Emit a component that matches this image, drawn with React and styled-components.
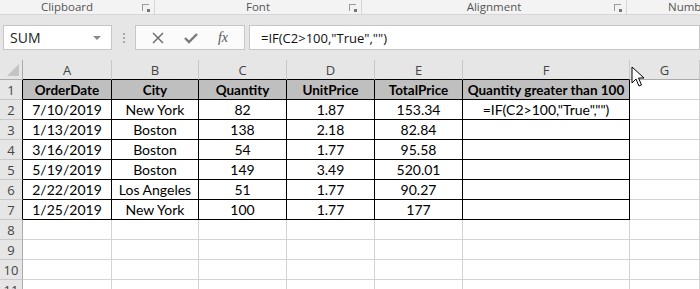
import React from 'react';
import styled, { createGlobalStyle } from 'styled-components';

const GlobalStyle = createGlobalStyle`
  body {
    margin: 0;
    background: #ffffff;
    overflow: hidden;
  }
`;

const Page = styled.div`
  position: relative;
  width: 700px;
  height: 289px;
  overflow: hidden;
  font-family: 'Open Sans', 'Noto Sans', sans-serif;
`;

const RibbonLabels = styled.div`
  display: flex;
  height: 14px;
  background: #f3f3f3;
  border-bottom: 1px solid #d6d6d6;
`;

const Group = styled.div`
  position: relative;
  flex: 0 0 ${(p) => p.$width}px;
  display: flex;
  align-items: flex-start;
  justify-content: ${(p) => (p.$start ? 'flex-start' : 'center')};
  padding-left: ${(p) => p.$pad || 0}px;
  padding-right: ${(p) => p.$padRight || 0}px;
  box-sizing: border-box;
  border-right: ${(p) => (p.$sep ? '1px solid #d6d6d6' : 'none')};
  font-size: 11.5px;
  color: #555;
  line-height: 13px;
  white-space: nowrap;
  overflow: hidden;
`;

const Launcher = styled.span`
  position: absolute;
  right: 5px;
  top: 4px;
  width: 7px;
  height: 7px;
  border-left: 1px solid #9a9a9a;
  border-top: 1px solid #9a9a9a;
  box-sizing: border-box;

  &::after {
    content: '';
    position: absolute;
    right: -1px;
    bottom: -1px;
    width: 3px;
    height: 3px;
    background: #777;
  }
`;

const FormulaBar = styled.div`
  display: flex;
  align-items: flex-start;
  height: 45px;
  padding: 10px 0 0 3px;
  box-sizing: border-box;
  background: #e6e6e6;
`;

const Field = styled.div`
  display: flex;
  align-items: center;
  height: 25px;
  box-sizing: border-box;
  background: #ffffff;
  border: 1px solid #c6c6c6;
  width: ${(p) => (p.$width ? `${p.$width}px` : 'auto')};
  flex: ${(p) => (p.$grow ? '1' : 'none')};
  margin-left: ${(p) => p.$ml || 0}px;
  font-size: 14px;
  color: #222;
`;

const NameText = styled.span`
  flex: 1;
  padding-left: 6px;
`;

const Caret = styled.span`
  width: 0;
  height: 0;
  margin-right: 10px;
  border-left: 4px solid transparent;
  border-right: 4px solid transparent;
  border-top: 4px solid #8a8a8a;
`;

const Dots = styled.div`
  display: flex;
  flex-direction: column;
  justify-content: center;
  gap: 2px;
  width: 23px;
  height: 25px;
  align-items: center;

  span {
    width: 2px;
    height: 2px;
    background: #a8a8a8;
  }
`;

const ButtonRow = styled(Field)`
  justify-content: space-around;
  padding: 0 6px;
  background: #fbfbfb;
`;

const Fx = styled.span`
  font-family: 'Liberation Serif', serif;
  font-style: italic;
  font-size: 14px;
  color: #555;
`;

const FormulaText = styled.span`
  padding-left: 11px;
  font-family: 'Open Sans', sans-serif;
  font-size: 13px;
  color: #111;
`;

const Sheet = styled.div`
  display: grid;
  grid-template-columns: 23px 89px 87px 88px 88px 88px 167px 70px;
  grid-auto-rows: 20px;
`;

const Cell = styled.div`
  box-sizing: border-box;
  display: flex;
  align-items: center;
  justify-content: center;
  border-right: 1px solid ${(p) => (p.$boxed ? '#000' : '#d4d4d4')};
  border-bottom: 1px solid ${(p) => (p.$boxed ? '#000' : '#d4d4d4')};
  background: ${(p) => (p.$head ? '#bfbfbf' : '#ffffff')};
  font-family: Lato, 'Liberation Sans', sans-serif;
  font-size: ${(p) => (p.$head ? 13.5 : 14)}px;
  font-weight: ${(p) => (p.$head ? 700 : 400)};
  color: #000;
  white-space: nowrap;
  overflow: hidden;
`;

const ColHead = styled.div`
  box-sizing: border-box;
  display: flex;
  align-items: center;
  justify-content: center;
  background: #e6e6e6;
  border-right: 1px solid #c9c9c9;
  border-bottom: 1px solid ${(p) => (p.$dark ? '#000' : '#ababab')};
  font-size: 13px;
  color: #444;
`;

const RowHead = styled.div`
  box-sizing: border-box;
  display: flex;
  align-items: center;
  justify-content: center;
  background: #e6e6e6;
  border-right: 1px solid ${(p) => (p.$dark ? '#000' : '#ababab')};
  border-bottom: 1px solid #c9c9c9;
  font-size: 13px;
  color: #444;
`;

const Corner = styled(ColHead)`
  border-right: 1px solid #ababab;
  border-bottom: 1px solid #ababab;
  align-items: flex-end;
  justify-content: flex-end;
  padding: 0 3px 3px 0;
`;

const Pointer = styled.svg`
  position: absolute;
  left: 631px;
  top: 66px;
`;

const columns = ['A', 'B', 'C', 'D', 'E', 'F', 'G'];

const rows = [
  ['OrderDate', 'City', 'Quantity', 'UnitPrice', 'TotalPrice', 'Quantity greater than 100'],
  ['7/10/2019', 'New York', '82', '1.87', '153.34', '=IF(C2>100,"True","")'],
  ['1/13/2019', 'Boston', '138', '2.18', '82.84', ''],
  ['3/16/2019', 'Boston', '54', '1.77', '95.58', ''],
  ['5/19/2019', 'Boston', '149', '3.49', '520.01', ''],
  ['2/22/2019', 'Los Angeles', '51', '1.77', '90.27', ''],
  ['1/25/2019', 'New York', '100', '1.77', '177', ''],
];

const App = () => {
  const cells = [];
  for (let r = 0; r < 11; r++) {
    const data = rows[r];
    cells.push(
      <RowHead key={`h${r}`} $dark={!!data}>
        {r + 1}
      </RowHead>
    );
    for (let c = 0; c < 7; c++) {
      const boxed = !!data && c < 6;
      cells.push(
        <Cell key={`${r}-${c}`} $boxed={boxed} $head={r === 0 && c < 6}>
          {boxed ? data[c] : ''}
        </Cell>
      );
    }
  }

  return (
    <Page>
      <GlobalStyle />
      <RibbonLabels>
        <Group $width={155} $padRight={20} $sep>
          Clipboard
          <Launcher />
        </Group>
        <Group $width={207} $sep>
          Font
          <Launcher />
        </Group>
        <Group $width={265} $sep>
          Alignment
          <Launcher />
        </Group>
        <Group $width={73} $start $pad={41}>
          Number
        </Group>
      </RibbonLabels>

      <FormulaBar>
        <Field $width={109}>
          <NameText>SUM</NameText>
          <Caret />
        </Field>
        <Dots>
          <span />
          <span />
          <span />
        </Dots>
        <ButtonRow $width={110}>
          <svg width="12" height="12" viewBox="0 0 12 12">
            <path d="M1 1 L11 11 M11 1 L1 11" stroke="#666" strokeWidth="1.4" fill="none" />
          </svg>
          <svg width="14" height="12" viewBox="0 0 14 12">
            <path d="M1 6 L5 10 L13 2" stroke="#7a7a7a" strokeWidth="2.4" fill="none" />
          </svg>
          <Fx>fx</Fx>
        </ButtonRow>
        <Field $grow $ml={4}>
          <FormulaText>=IF(C2&gt;100,"True","")</FormulaText>
        </Field>
      </FormulaBar>

      <Sheet>
        <Corner>
          <svg width="12" height="12" viewBox="0 0 12 12">
            <path d="M12 0 L12 12 L0 12 Z" fill="#c4c4c4" />
          </svg>
        </Corner>
        {columns.map((col, i) => (
          <ColHead key={col} $dark={i < 6}>
            {col}
          </ColHead>
        ))}
        {cells}
      </Sheet>

      <Pointer width="14" height="22" viewBox="0 0 14 22">
        <path
          d="M1 1 L1 17 L5 13 L8 20 L10.5 19 L7.5 12 L13 12 Z"
          fill="#ffffff"
          stroke="#000"
          strokeWidth="1"
          strokeLinejoin="miter"
        />
      </Pointer>
    </Page>
  );
};

export default App;
